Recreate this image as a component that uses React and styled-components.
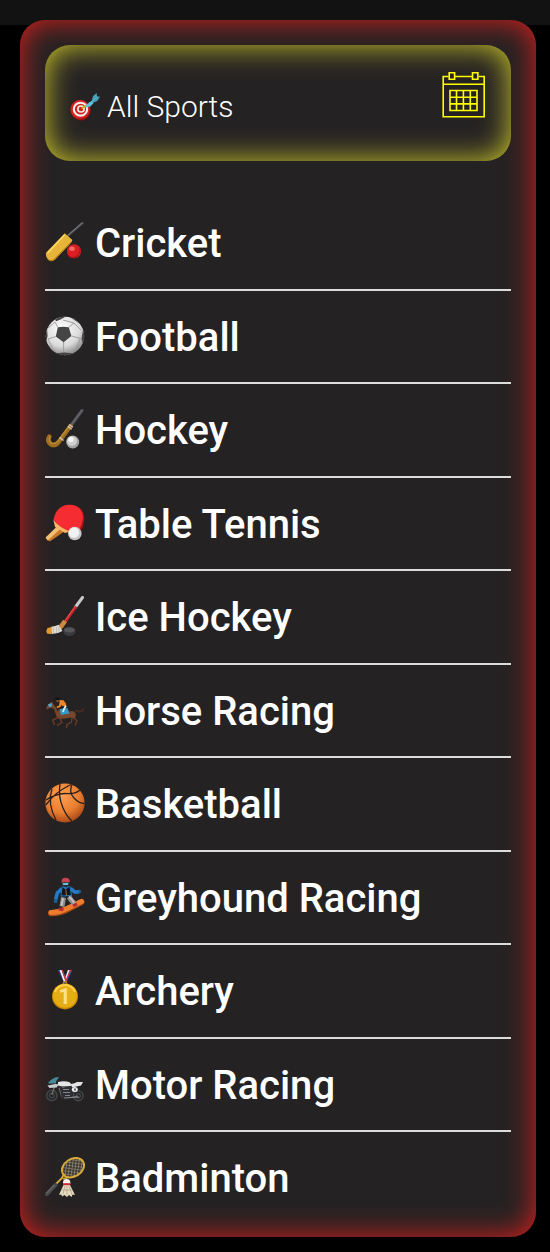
import React from 'react';
import styled, {createGlobalStyle} from 'styled-components';

const GlobalStyle = createGlobalStyle`
* {
  box-sizing: border-box;
}
body {
  margin: 0;
  background: #000;
  color: #fff;
  font-family: Roboto, "Liberation Sans", sans-serif;
}
`

const TopStrip = styled.div`
height: 25px;
background: #121212;
`

const Panel = styled.main`
display: flex;
flex-direction: column;
min-height: calc(100vh - 35px);
margin: -5px 14px 15px 20px;
padding: 25px;
border-radius: 25px;
background: #252223;
box-shadow: inset 0 0 30px #dd1f1b;
`

const TitleBar = styled.header`
display: flex;
justify-content: space-between;
align-items: flex-start;
min-height: 116px;
padding: 25px;
border-radius: 25px;
background: #252223;
box-shadow: inset 0 0 30px #d2cd2a;
`

const Title = styled.h1`
display: flex;
gap: 7px;
margin: 21px 0 0;
font-size: 30px;
font-weight: 300;
line-height: 32px;
`

const CalendarButton = styled.button`
display: flex;
padding: 0;
border: 0;
background: none;
color: #ff0;
cursor: pointer;
`

const SportList = styled.ul`
display: flex;
flex-direction: column;
flex: 1;
margin: 36px 0 0;
padding: 0;
list-style: none;
`

const SportRow = styled.li`
flex: 1 0 auto;
border-bottom: 2px solid #dcdcdc;

&:last-child {
  flex: none;
  border-bottom: 0;
}
`

const SportLink = styled.a`
display: flex;
align-items: flex-start;
gap: 10px;
padding: 25px 0 11px;
color: inherit;
font-size: 40px;
font-weight: 500;
line-height: 44px;
text-decoration: none;
`

const Picture = styled.svg`
flex: none;
width: ${props => props.$size}px;
height: ${props => props.$size}px;
`

const Emoji = ({size = 40, children}) => (
  <Picture $size={size} viewBox="0 0 40 40" fill="none" aria-hidden="true">
    {children}
  </Picture>
)

const Calendar = () => (
  <svg width="44" height="50" viewBox="0 0 44 50" fill="none" stroke="currentColor" strokeWidth="1.6" aria-hidden="true">
    <path d="M6.5 6.5H1.2V46.7H42.2V6.5H37M13 6.5H30M1.2 14.3H42.2" />
    <path d="M7.2 2.8h5.4v6.4H7.2zM30.5 2.8h5.4v6.4h-5.4z" />
    <path d="M8 20.5h27v20H8zM14.5 20.5v20M21.4 20.5v20M28.3 20.5v20M8 27.2h27M8 33.9h27" />
  </svg>
)

const Target = () => (
  <Emoji size={30}>
    <ellipse cx="14.6" cy="26" rx="13" ry="13.4" fill="#8d1212" />
    <ellipse cx="13.6" cy="24.6" rx="13" ry="12.8" fill="#d32020" />
    <ellipse cx="14" cy="24.2" rx="8.9" ry="8.6" stroke="#f4eee9" strokeWidth="2.8" />
    <ellipse cx="14.6" cy="24" rx="4.2" ry="4" fill="#d32020" stroke="#f4eee9" strokeWidth="2.2" />
    <path d="M15.5 23.5l6-4.5" stroke="#d8a626" strokeWidth="2.2" />
    <path d="M20.5 20l5.5-5.5 4-1.5 1.5 3-4.5 4.5-5.5 1.5z" fill="#59c6dc" />
    <path d="M29 13l1.5-6 5-4.5.5 4.5 4 .5-4 6-6 2z" fill="#469eb8" />
    <path d="M26 17L36 8" stroke="#5fb9cd" strokeWidth="1.2" />
  </Emoji>
)

const Cricket = () => (
  <Emoji>
    <path d="M22 14.5L37.5 1" stroke="#55565a" strokeWidth="2.2" strokeLinecap="round" />
    <path d="M23 13L37 1" stroke="#8b8d90" strokeWidth=".7" />
    <path d="M19.8 11.2L27.4 18Q27 20 25 22L10 37.5Q7 40 3 37.5Q0 34 1.2 30.5Z" fill="#e7b43a" />
    <path d="M25.5 20L9 37Q5.5 39.5 2 36.5l2.2 2.2Q7.5 40 10.2 37.4L27.4 18.4Z" fill="#b67b18" />
    <path d="M19.5 13L2.7 31" stroke="#ffd766" strokeWidth="1.6" />
    <circle cx="29" cy="29.3" r="7" fill="#d81f22" />
    <path d="M35 26Q36 33 29 35.6Q25 36 23 33" stroke="#a81218" strokeWidth="1.2" />
    <ellipse cx="27" cy="26.8" rx="2.7" ry="2.2" fill="#f66a66" />
  </Emoji>
)

const Football = () => (
  <Emoji>
    <defs>
      <radialGradient id="footballSkin" cx=".42" cy=".3" r=".72">
        <stop offset="0" stopColor="#fff" />
        <stop offset=".65" stopColor="#dadada" />
        <stop offset="1" stopColor="#858585" />
      </radialGradient>
      <clipPath id="footballClip"><circle cx="20" cy="20" r="19.2" /></clipPath>
    </defs>
    <circle cx="20" cy="20" r="19.2" fill="url(#footballSkin)" />
    <g clipPath="url(#footballClip)">
      <path d="M12.8 11.2Q18 10.2 23.8 11.2L26.4 20L18.6 26.2L10.8 20.6ZM10 3.5L14 1h6l-4 2.2-5 2zM25 1l6 1 4 6-5-3.5zM0 13l2-1 .6 8L1 27zM38 14l2-1v14l-2 1-1.5-5zM12 37.3l7-.8 8 .8 1 3H12zM1 27l4 4 2 4-7-3z" fill="#454545" />
      <path d="M12.8 11.2L10 6M23.8 11.2L29 7M26.4 20l9 2.4M18.6 26v10M10.8 20.6L3 23M10 6L3 12M29 7l-11-3M29 7l7 7M35.4 22.4L31 33l-5 4M3 23l5 10 4 4" stroke="#989898" strokeWidth=".9" />
    </g>
  </Emoji>
)

const Hockey = () => (
  <Emoji>
    <path d="M37 1.5L26 16.5" stroke="#55565b" strokeWidth="3" strokeLinecap="round" />
    <path d="M36.5 1.5L25 17" stroke="#77797e" strokeWidth=".6" />
    <path d="M25.5 17L13.8 33Q10 37.5 6 35.5Q1.5 32 4.3 27.6" stroke="#a06e1f" strokeWidth="4.4" strokeLinecap="round" />
    <path d="M24.5 17L13 32Q9 36 6 33.5Q3.5 31 5 28" stroke="#b98932" strokeWidth="1.6" strokeLinecap="round" />
    <path d="M24 15.5l4 2.8M14.5 28.5l4 3M22.8 17.2l4 3" stroke="#d2cdc4" strokeWidth="1.1" />
    <circle cx="27.7" cy="33" r="6.5" fill="#a2a3a4" />
    <circle cx="27" cy="32" r="5" fill="#cfcfcf" />
    <circle cx="26" cy="30.5" r="2.6" fill="#f4f4f4" />
  </Emoji>
)

const TableTennis = () => (
  <Emoji>
    <path d="M15 22l5 6L5.5 38Q3 39 .8 35Z" fill="#c77a2b" />
    <path d="M14.5 21l3 3L2.8 37.5.5 34.5Z" fill="#f3bf70" />
    <path d="M9.5 17Q12 3 24 2Q39 2.5 39.3 15Q39.5 23 34 31L20 29Z" fill="#a71118" />
    <path d="M8.4 17Q11 3 23 1.8Q37 1.4 38 14Q37.4 23 32.5 29Q20 31 8.4 17Z" fill="#f52c31" />
    <path d="M8.4 17Q15 25 25 28.5L20 30L10 24Z" fill="#f6b568" />
    <circle cx="29.8" cy="30.5" r="6.8" fill="#c7c7c9" />
    <circle cx="29" cy="29.5" r="5.2" fill="#f2f2f2" />
  </Emoji>
)

const IceHockey = () => (
  <Emoji>
    <path d="M37.5 1.5L30.5 11" stroke="#c9c9cb" strokeWidth="3" strokeLinecap="round" />
    <path d="M31 10.5L19.5 27" stroke="#c3252b" strokeWidth="3" />
    <path d="M30 10.5L18.7 26.5" stroke="#f04e50" strokeWidth="1.1" />
    <path d="M20 25l-4 5.5Q14 33 5 34.5" stroke="#cd8a3d" strokeWidth="4.6" />
    <path d="M15.5 31.8Q12 34 6.5 34.4" stroke="#dedbd3" strokeWidth="7.4" />
    <path d="M6.5 31L2.5 32Q.5 34.6 2 37.6L6.5 38.2Z" fill="#e79a2c" />
    <path d="M8.5 31.5v6M11.5 31v6M14 30v5.5" stroke="#aaa69e" strokeWidth=".6" />
    <ellipse cx="24.4" cy="35.4" rx="6" ry="4.6" fill="#3a3b3e" />
    <ellipse cx="24.3" cy="34" rx="5.5" ry="2.6" fill="#55565a" />
  </Emoji>
)

const HorseRacing = () => (
  <Emoji>
    <path d="M29 23Q32 19.5 34 21.5Q36.500 22.500 39 18.500" stroke="#4b2c20" strokeWidth="1.6" />
    <path d="M1 18.300L3 14.500L6.800 11.700L8.500 13L12.500 19Q15 21.500 20 22L27.500 21Q30.500 22 31 25L29.500 29L26 27.500L20 28.500L14.500 29L11.500 26.500L9 19L5.500 17.500L2 19.500Z" fill="#76462d" />
    <path d="M13 27.500L7.800 30L9.500 35M15 28.500L17 32.500L12 35.500M27 27.500L26.500 32L22 34.500L21.500 38M29 28L32 31L30 35.500" stroke="#683d27" strokeWidth="1.400" />
    <path d="M8 12.500L11.500 17L13 21" stroke="#34201a" strokeWidth="1.4" />
    <path d="M2.800 14.500L6.500 13L7.200 16L4.500 17.500Z" fill="#4ea3cc" />
    <path d="M14.500 19L22.500 18L24.500 23.500L16 25Z" fill="#3498c8" />
    <path d="M14 10L18.500 10.300L21.300 14L20 16.500L16.500 15.500Z" fill="#f08024" />
    <path d="M15.500 11.500L15 16L11.800 17.500" stroke="#ee8b2c" strokeWidth="1.800" />
    <path d="M21 15.500L19 19L18 22" stroke="#e8e7e2" strokeWidth="1.800" />
    <ellipse cx="12.500" cy="9" rx="2.300" ry="1.700" fill="#151318" />
    <path d="M11.5 11h2" stroke="#c98d65" strokeWidth="1.2" />
  </Emoji>
)

const Basketball = () => (
  <Emoji>
    <defs>
      <radialGradient id="basketballSkin" cx=".42" cy=".3" r=".75">
        <stop offset="0" stopColor="#ffa050" />
        <stop offset=".6" stopColor="#e87d30" />
        <stop offset="1" stopColor="#a14214" />
      </radialGradient>
    </defs>
    <circle cx="20" cy="20" r="19.6" fill="url(#basketballSkin)" />
    <path d="M1.2 17Q10 11 20 10.5Q30 11.5 35 7M.8 22Q10 9 26 1.5M15 1.2Q13 14 18 25Q22 34 27 38M7 6Q2 20 11 37M27 1.8Q23.5 9 29 15Q34 20.5 39.4 20.5" stroke="#2b211d" strokeWidth="1.3" />
  </Emoji>
)

const Snowboarder = () => (
  <Emoji>
    <path d="M6 36.2Q14 36.5 22 32.5T36.5 25" stroke="#a94a18" strokeWidth="6" strokeLinecap="round" />
    <path d="M6 35.4Q14 35.5 22 31.5T36.5 24.4" stroke="#ef7c2c" strokeWidth="5" strokeLinecap="round" />
    <path d="M18.500 20.500L17 29.500M24 20L26 23L29.500 26.500" stroke="#8f8e8d" strokeWidth="5" />
    <path d="M18 21L16.500 29M24 19.500L27 22.500L29 26" stroke="#c4c2bf" strokeWidth="1.800" />
    <path d="M14 30.500L19 31L18 34.300L13.500 33.500ZM27.500 27.500L31.500 25.800L32.800 28.300L28.500 30.200Z" fill="#b72a39" />
    <path d="M17 11.500L12.300 16L10.700 22.500M25.500 11.500L30 15.200L34.500 14.600" stroke="#247bc5" strokeWidth="3.600" strokeLinejoin="round" />
    <path d="M16.500 9.500L25.500 9.300L27 19L15.500 19.500Z" fill="#247bc5" />
    <path d="M17.500 10L20.500 12.500L24.500 9.800L26 18L16.500 18.500Z" fill="#12171d" />
    <path d="M20.800 12.500L21.500 18.500" stroke="#c9a24a" strokeWidth=".7" />
    <path d="M9 22.500L12.500 22.500L12 26L8.800 25.500ZM33.800 13L36.300 13.500L35.500 16L33.500 16Z" fill="#17639d" />
    <path d="M17 5h7.500l-.5 4-3 1.500-3.500-2z" fill="#26303b" />
    <path d="M17.500 6.200l6-.4-.5 2.200h-5z" fill="#6cc3cf" />
    <path d="M16.500 5.400Q16 1 20.500.800Q25 1 25 5Z" fill="#c9434e" />
  </Emoji>
)

const Medal = () => (
  <Emoji>
    <path d="M13 0h4.5L22 11l-3 2z" fill="#2b4fa2" />
    <path d="M22.8 0h4.7l-6.3 13-3-2z" fill="#2b4fa2" />
    <path d="M15.5 0l4.5 12M24 0l-4 12" stroke="#f4f2f3" strokeWidth="2" />
    <path d="M17.2 0l3.500 10M25.500 0l-5 12" stroke="#c93542" strokeWidth="1.4" />
    <circle cx="20" cy="13.3" r="1.8" stroke="#b98115" strokeWidth="1.2" />
    <circle cx="20" cy="26.4" r="13" fill="#c98600" />
    <circle cx="20" cy="25.8" r="12" fill="#e5ad16" />
    <path d="M10 22Q12 15 21 15Q28 16 30 22" stroke="#ffd342" strokeWidth="2" />
    <text x="19.5" y="33.5" textAnchor="middle" fontFamily="Roboto" fontSize="22" fontWeight="700" fill="#ffe089">1</text>
  </Emoji>
)

const Motorcycle = () => (
  <Emoji>
    <circle cx="6.8" cy="31.5" r="5.2" fill="#222426" stroke="#424447" strokeWidth="1.6" />
    <circle cx="33.2" cy="31.8" r="4.8" fill="#222426" stroke="#424447" strokeWidth="1.6" />
    <circle cx="6.8" cy="31.5" r="2.4" stroke="#66696c" strokeWidth=".7" />
    <circle cx="33.2" cy="31.8" r="2.2" stroke="#66696c" strokeWidth=".7" />
    <path d="M10 21L6.8 31M14 24l3 9h12l4-1" stroke="#6d7074" strokeWidth="1.2" />
    <path d="M15 23h11l3 6-4 6h-8z" fill="#2d2f32" />
    <path d="M18 25.5h6M18 28.5h7M20 31.5h5M19 34l15-1" stroke="#8d9094" strokeWidth=".9" />
    <path d="M3 19.5q3-6 11-6.5l-3 4.5v2z" fill="#438b9b" />
    <path d="M2.5 21.5l8-1.5 4 .5-3 3-7 .5z" fill="#c9cccc" />
    <path d="M13 18q7-1.5 12 .5l2 3-9 2-5-2.5zM26 20q4-.5 6-2h6l-2 3.5-9 2z" fill="#e4e5e4" />
    <path d="M12 22.8h14" stroke="#3b3d40" strokeWidth="1" />
    <ellipse cx="29.8" cy="25.5" rx="3" ry="2.5" fill="#eceeec" />
    <path d="M29.2 24.5h1.6v2h-1.6z" fill="#45474a" />
  </Emoji>
)

const Badminton = () => (
  <Emoji>
    <defs>
      <pattern id="racketMesh" width="3" height="3" patternUnits="userSpaceOnUse" patternTransform="rotate(40)">
        <path d="M0 0h3M0 0v3" stroke="#a9a28c" strokeWidth="1.2" />
      </pattern>
    </defs>
    <ellipse cx="28" cy="10.7" rx="11.8" ry="8.8" transform="rotate(-32 28 10.7)" fill="#37332d" />
    <ellipse cx="28" cy="10.7" rx="11.8" ry="8.8" transform="rotate(-32 28 10.7)" fill="url(#racketMesh)" stroke="#d9aa39" strokeWidth="2" />
    <path d="M19 17l-2 4-8 8M24 20l-6 2" stroke="#d9aa39" strokeWidth="1.8" />
    <path d="M10.5 28L2 37" stroke="#4c4c4e" strokeWidth="4" strokeLinecap="round" />
    <path d="M9.5 28L1.5 36" stroke="#858587" strokeWidth=".8" />
    <path d="M18.5 28h6.5l5 10-2.5-.5-1 2.5-2.5-2-2 2-2.5-2-2.5 1.5-.7-2-2.3.3z" fill="#e6dcc2" />
    <path d="M20 29l-2 8M22 29v9M24 29l3 9M17 33h10" stroke="#a99c80" strokeWidth=".7" />
    <path d="M18 27Q17.5 22 21.7 22Q25.8 22 25.4 27Z" fill="#f4f3f1" />
    <path d="M18 27.2h7.4" stroke="#cb2931" strokeWidth="2" />
  </Emoji>
)

const sports = [
  {name: 'Cricket', Icon: Cricket},
  {name: 'Football', Icon: Football},
  {name: 'Hockey', Icon: Hockey},
  {name: 'Table Tennis', Icon: TableTennis},
  {name: 'Ice Hockey', Icon: IceHockey},
  {name: 'Horse Racing', Icon: HorseRacing},
  {name: 'Basketball', Icon: Basketball},
  {name: 'Greyhound Racing', Icon: Snowboarder},
  {name: 'Archery', Icon: Medal},
  {name: 'Motor Racing', Icon: Motorcycle},
  {name: 'Badminton', Icon: Badminton},
]

const App = () => {
  return <>
    <GlobalStyle />
    <TopStrip />
    <Panel>
      <TitleBar>
        <Title><Target />All Sports</Title>
        <CalendarButton type="button" aria-label="Calendar">
          <Calendar />
        </CalendarButton>
      </TitleBar>

      <SportList>
        {sports.map(({name, Icon}) =>
          <SportRow key={name}>
            <SportLink href="#"><Icon />{name}</SportLink>
          </SportRow>)}
      </SportList>
    </Panel>
  </>;
};

export default App;
